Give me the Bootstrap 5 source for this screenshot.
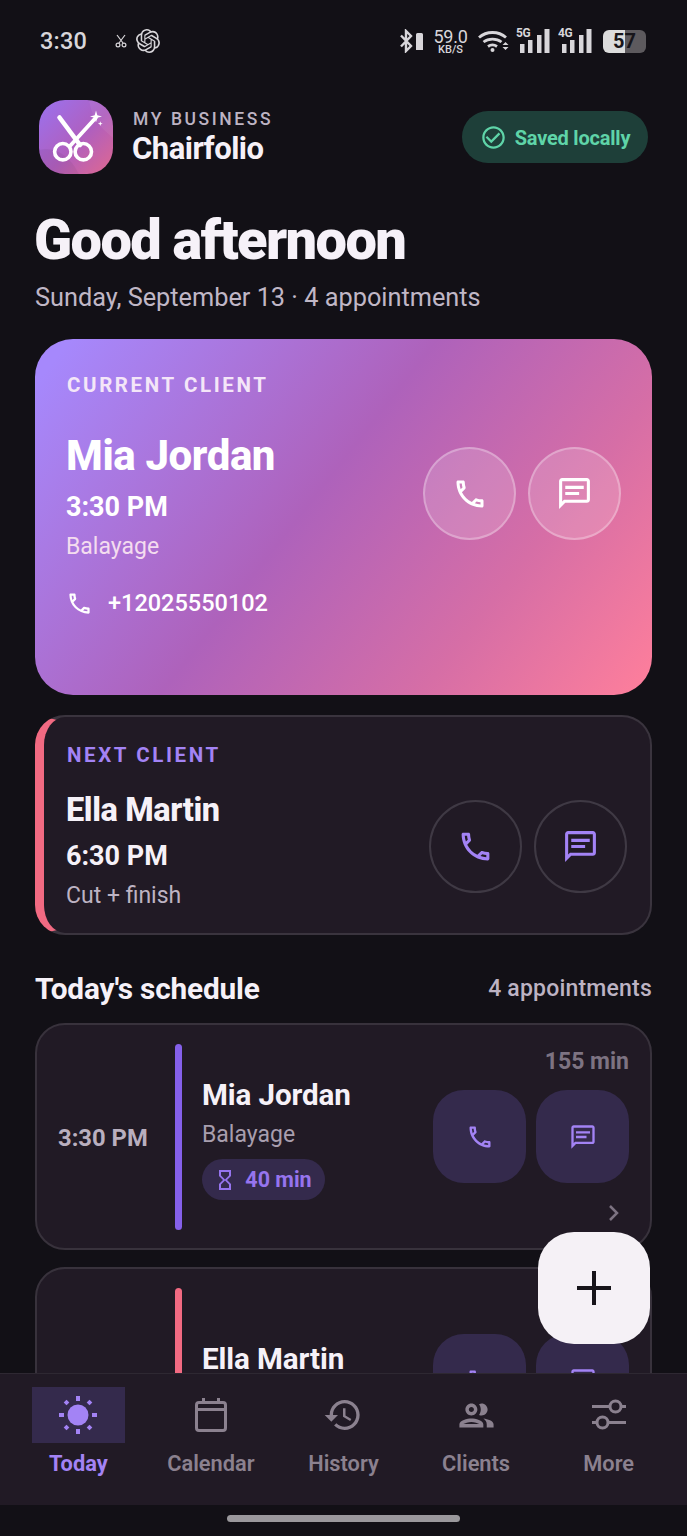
<!DOCTYPE html>
<html lang="en">
<head>
    <meta charset="UTF-8">
    <meta name="viewport" content="width=device-width, initial-scale=1.0">
    <link href="https://cdn.jsdelivr.net/npm/bootstrap@5.3.3/dist/css/bootstrap.min.css" rel="stylesheet">
    <title>Chairfolio</title>
    <style>
        html, body { height: 1536px; overflow: hidden; }
        body { background: #121016; font-family: Roboto, "Liberation Sans", sans-serif; color: #f6f1f8; }
        .ic { fill: currentColor; display: block; flex: none; }
        .app-shell { position: relative; width: 687px; height: 1536px; overflow: hidden; }

        .status-row { height: 82px; padding: 0 41px 0 40px; color: #d8d6da; }
        .status-time { font-size: 23.5px; font-weight: 500; line-height: 28px; letter-spacing: .2px; width: 74px; }
        .bt-wrap { margin-right: 10px; gap: 3px; }
        .speed { width: 35px; margin-right: 10px; line-height: 1; text-align: center; }
        .speed b { display: block; font-size: 18px; font-weight: 400; line-height: 17px; letter-spacing: -.3px; }
        .speed i { display: block; font-size: 11px; font-style: normal; line-height: 10px; font-weight: 500; }
        .wifi { margin-right: 6px; }
        .sig { position: relative; width: 34px; height: 24px; margin-right: 8px; }
        .sig.last-sig { margin-right: 11px; }
        .sig-tag { position: absolute; left: 0; top: -2px; font-size: 13px; line-height: 12px; font-weight: 700; letter-spacing: -.4px; transform: scaleX(.92); transform-origin: left; }
        .batt { position: relative; width: 43px; height: 23px; border-radius: 6px; background: linear-gradient(90deg, #dcdcdc 51%, #5d5a5e 51%); color: #17151a; font-size: 20px; font-weight: 700; line-height: 23px; text-align: center; }

        .main-scroll { height: 1291px; overflow: hidden; padding: 18px 35px 0; }
        .brand-logo { width: 74px; height: 74px; border-radius: 26px; overflow: hidden; margin-left: 4px; }
        .brand-text { padding-top: 4px; }
        .brand-kicker { font-size: 17.5px; font-weight: 500; letter-spacing: 2.6px; color: #bdb3c3; line-height: 20px; }
        .brand-name { font-size: 31px; font-weight: 700; line-height: 40px; letter-spacing: -.5px; margin-left: -1px; }
        .saved-pill { width: 186px; height: 52px; margin-right: 4px; margin-top: 11px; padding-top: 1px; background: #1e3f39; color: #5fd4a8; border-radius: 26px; font-size: 20px; font-weight: 700; letter-spacing: -.2px; }
        .greeting { font-size: 56px; font-weight: 900; line-height: 62px; letter-spacing: -1.6px; margin: 35px 0 0 -1px; }
        .sub-line { font-size: 25.3px; color: #c0b7c6; line-height: 30px; margin-top: 12px; margin-bottom: 26px; }

        .hero-card { height: 356px; border-radius: 38px; padding: 33px 31px 0 31px; background: linear-gradient(128deg, #a688fc 4%, #ae62bb 45%, #d66ea6 74%, #ff7f9b 100%); color: #fff; }
        .kicker { font-size: 20.5px; font-weight: 700; letter-spacing: 2.6px; line-height: 26px; }
        .hero-kicker { color: #f4e6f8; margin-left: 1px; }
        .hero-name { font-size: 42px; font-weight: 800; line-height: 48px; letter-spacing: -.4px; margin-top: 34px; }
        .hero-time { font-size: 27px; font-weight: 700; line-height: 34px; margin-top: 10px; }
        .hero-note { font-size: 23px; color: #f4dcef; line-height: 28px; margin-top: 9px; }
        .hero-phone { font-size: 23.5px; font-weight: 500; line-height: 30px; margin-top: 27px; gap: 15px; }
        .round-btn { width: 93px; height: 93px; border-radius: 50%; background: rgba(255,255,255,.16); border: 2px solid rgba(255,255,255,.28); color: #fff; }
        .hero-actions { margin-top: 75px; }

        .next-card { height: 220px; margin-top: 20px; border-radius: 30px; background: #211a25; border: 2px solid #3a343e; border-left: 9px solid #f26a82; padding: 25px 23px 0 22px; }
        .next-kicker { color: #a383f5; margin-left: 1px; }
        .next-name { font-size: 32.5px; font-weight: 800; line-height: 40px; letter-spacing: -.4px; margin-top: 22px; }
        .next-time { font-size: 27px; font-weight: 700; line-height: 34px; margin-top: 9px; }
        .next-note { font-size: 23px; color: #bdb3c3; line-height: 28px; margin-top: 9px; }
        .line-btn { width: 93px; height: 93px; border-radius: 50%; border: 2px solid #3f3944; color: #a383f5; }
        .next-actions { margin-top: 58px; }

        .sched-head { margin-top: 36px; margin-bottom: 16px; height: 36px; }
        .sched-title { font-size: 29.8px; font-weight: 700; letter-spacing: -.2px; }
        .sched-count { font-size: 23px; font-weight: 500; color: #bdb3c3; letter-spacing: .2px; }
        .sched-item { height: 227px; margin-bottom: 17px; border-radius: 30px; background: #211a25; border: 2px solid #38323c; padding: 19px 21px 18px 21px; }
        .sched-item.tall-item { height: 267px; }
        .sched-time { width: 117px; font-size: 23.8px; font-weight: 700; color: #b9afbf; margin-top: 3px; }
        .time-bar { width: 7px; border-radius: 4px; margin-right: 20px; }
        .bar-violet { background: #8560ea; }
        .bar-pink { background: #f26a82; }
        .sched-body { margin-top: 2px; }
        .sched-name { font-size: 29.6px; font-weight: 700; line-height: 36px; letter-spacing: -.1px; }
        .sched-note { font-size: 23px; color: #a89eae; line-height: 28px; margin-top: 8px; }
        .dur-pill { height: 41px; width: 123px; margin-top: 10px; padding: 2px 2px 0 0; border-radius: 21px; background: #342a4c; color: #9674ee; font-size: 21.5px; font-weight: 700; }
        .tall-body { padding-top: 59px; }
        .tall-body .sched-name { line-height: 24px; }
        .sched-side { width: 196px; }
        .sched-mins { font-size: 23px; font-weight: 700; color: #7d7382; line-height: 28px; margin-top: 4px; margin-bottom: 14px; text-align: right; }
        .tile-btn { width: 93px; height: 93px; border-radius: 31px; background: #342a4c; color: #a383f5; }
        .chevron { margin: 21px 8px 0 auto; color: #7d7382; }

        .add-fab { position: absolute; left: 538px; top: 1232px; width: 112px; height: 112px; border-radius: 36px; background: #f5f1f6; color: #17141a; border: 0; z-index: 3; }

        .tab-bar { height: 132px; padding: 13px 12px 0; background: #211a25; border-top: 1px solid #2e2832; position: relative; z-index: 2; }
        .tab-item { width: 132.6px; color: #8b818f; font-size: 21.8px; font-weight: 600; }
        .tab-icon { width: 93px; height: 56px; }
        .tab-item.active { color: #a383f5; font-weight: 700; }
        .tab-item.active .tab-icon { background: #342a4c; }
        .tab-label { line-height: 28px; margin-top: 7px; }
        .home-row { height: 31px; padding-top: 10px; }
        .home-pill { width: 233px; height: 7px; border-radius: 4px; background: #9a989c; }
    </style>
</head>
<body>
    <svg width="0" height="0" class="position-absolute">
        <symbol id="i-phone" viewBox="0 0 24 24"><path d="M6.54 5c.06.89.21 1.76.45 2.59l-1.2 1.2c-.41-1.2-.67-2.47-.76-3.79h1.51m9.86 12.02c.85.24 1.72.39 2.6.45v1.49c-1.32-.09-2.59-.35-3.8-.75l1.2-1.19M7.5 3H4c-.55 0-1 .45-1 1 0 9.39 7.61 17 17 17 .55 0 1-.45 1-1v-3.49c0-.55-.45-1-1-1-1.24 0-2.45-.2-3.57-.57-.1-.04-.21-.05-.31-.05-.26 0-.51.1-.71.29l-2.2 2.2c-2.83-1.45-5.15-3.76-6.59-6.59l2.2-2.2c.28-.28.36-.67.25-1.02C8.7 6.45 8.5 5.25 8.5 4c0-.55-.45-1-1-1z"/></symbol>
        <symbol id="i-chat" viewBox="0 0 24 24"><path d="M20 2H4c-1.1 0-2 .9-2 2v18l4-4h14c1.1 0 2-.9 2-2V4c0-1.1-.9-2-2-2zm0 14H5.17L4 17.17V4h16v12zM6 7h12v2H6zm0 4h9v2H6z"/></symbol>
        <symbol id="i-history" viewBox="0 0 24 24"><path d="M13 3c-4.97 0-9 4.03-9 9H1l3.89 3.89.07.14L9 12H6c0-3.87 3.13-7 7-7s7 3.13 7 7-3.13 7-7 7c-1.93 0-3.68-.79-4.94-2.06l-1.42 1.42C8.27 19.99 10.51 21 13 21c4.97 0 9-4.03 9-9s-4.03-9-9-9zm-1 5v5l4.28 2.54.72-1.21-3.5-2.08V8H12z"/></symbol>
        <symbol id="i-people" viewBox="0 0 24 24"><path d="M9 13.75c-2.34 0-7 1.17-7 3.5V19h14v-1.75c0-2.33-4.66-3.5-7-3.5zM4.34 17c.84-.58 2.87-1.25 4.66-1.25s3.82.67 4.66 1.25H4.34zM9 12c1.93 0 3.5-1.57 3.5-3.5S10.93 5 9 5 5.5 6.57 5.5 8.5 7.07 12 9 12zm0-5c.83 0 1.5.67 1.5 1.5S9.83 10 9 10s-1.5-.67-1.5-1.5S8.17 7 9 7zm7.04 6.81c1.16.84 1.96 1.96 1.96 3.44V19h4v-1.75c0-2.02-3.5-3.17-5.96-3.44zM15 12c1.93 0 3.5-1.57 3.5-3.5S16.93 5 15 5c-.54 0-1.04.13-1.5.35.63.89 1 1.98 1 3.15s-.37 2.26-1 3.15c.46.22.96.35 1.5.35z"/></symbol>
        <symbol id="i-hourglass" viewBox="0 0 24 24"><path d="M6 2v6h.01L6 8.01 10 12l-4 4 .01.01H6V22h12v-5.99h-.01L18 16l-4-4 4-3.99-.01-.01H18V2H6zm10 14.5V20H8v-3.5l4-4 4 4zm-4-5l-4-4V4h8v3.5l-4 4z"/></symbol>
        <symbol id="i-check" viewBox="0 0 24 24"><path d="M16.59 7.58 10 14.17l-3.59-3.58L5 12l5 5 8-8zM12 2C6.48 2 2 6.48 2 12s4.48 10 10 10 10-4.48 10-10S17.52 2 12 2zm0 18c-4.42 0-8-3.58-8-8s3.58-8 8-8 8 3.58 8 8-3.58 8-8 8z"/></symbol>
        <symbol id="i-bars" viewBox="0 0 34 24"><rect x="4" y="15" width="4.500" height="9"/><rect x="12" y="11" width="4.500" height="13"/><rect x="21" y="6" width="4.500" height="18"/><rect x="28.500" y="0" width="5" height="24"/></symbol>
    </svg>

    <div class="app-shell">
        <div class="status-row d-flex align-items-center">
            <div class="status-time">3:30</div>
            <svg width="14" height="14" viewBox="0 0 14 14" fill="none" stroke="currentColor" stroke-width="1.2"><path d="M3 1l6 8M11 1L5 9"/><circle cx="4" cy="11" r="1.9"/><circle cx="10" cy="11" r="1.9"/></svg>
            <svg class="ms-2 ic" width="24" height="24" viewBox="0 0 24 24"><path d="M22.2819 9.8211a5.9847 5.9847 0 0 0-.5157-4.9108 6.0462 6.0462 0 0 0-6.5098-2.9A6.0651 6.0651 0 0 0 4.9807 4.1818a5.9847 5.9847 0 0 0-3.9977 2.9 6.0462 6.0462 0 0 0 .7427 7.0966 5.98 5.98 0 0 0 .511 4.9107 6.051 6.051 0 0 0 6.5146 2.9001A5.9847 5.9847 0 0 0 13.2599 24a6.0557 6.0557 0 0 0 5.7718-4.2058 5.9894 5.9894 0 0 0 3.9977-2.9001 6.0557 6.0557 0 0 0-.7475-7.0729zm-9.022 12.6081a4.4755 4.4755 0 0 1-2.8764-1.0408l.1419-.0804 4.7783-2.7582a.7948.7948 0 0 0 .3927-.6813v-6.7369l2.02 1.1686a.071.071 0 0 1 .038.052v5.5826a4.504 4.504 0 0 1-4.4945 4.4944zm-9.6607-4.1254a4.4708 4.4708 0 0 1-.5346-3.0137l.142.0852 4.783 2.7582a.7712.7712 0 0 0 .7806 0l5.8428-3.3685v2.3324a.0804.0804 0 0 1-.0332.0615L9.74 19.9502a4.4992 4.4992 0 0 1-6.1408-1.6464zM2.3408 7.8956a4.485 4.485 0 0 1 2.3655-1.9728V11.6a.7664.7664 0 0 0 .3879.6765l5.8144 3.3543-2.0201 1.1685a.0757.0757 0 0 1-.071 0l-4.8303-2.7865A4.504 4.504 0 0 1 2.3408 7.872zm16.5963 3.8558L13.1038 8.364 15.1192 7.2a.0757.0757 0 0 1 .071 0l4.8303 2.7913a4.4944 4.4944 0 0 1-.6765 8.1042v-5.6772a.79.79 0 0 0-.407-.667zm2.0107-3.0231l-.142-.0852-4.7735-2.7818a.7759.7759 0 0 0-.7854 0L9.409 9.2297V6.8974a.0662.0662 0 0 1 .0284-.0615l4.8303-2.7866a4.4992 4.4992 0 0 1 6.6802 4.66zM8.3065 12.863l-2.02-1.1638a.0804.0804 0 0 1-.038-.0567V6.0742a4.4992 4.4992 0 0 1 7.3757-3.4537l-.142.0805L8.704 5.459a.7948.7948 0 0 0-.3927.6813zm1.0976-2.3654l2.602-1.4998 2.6069 1.4998v2.9994l-2.5974 1.4997-2.6067-1.4997Z"/></svg>
            <div class="ms-auto d-flex align-items-center">
                <div class="bt-wrap d-flex align-items-center">
                    <svg width="13" height="24" viewBox="0 0 13 24" fill="none" stroke="currentColor" stroke-width="2.4"><path d="M1 6.500l10 10.500-5 5V2l5 5L1 17.500"/></svg>
                    <svg width="7" height="17" viewBox="0 0 7 17"><path d="M1.500 0h4A1.500 1.500 0 0 1 7 1.500V17H0V1.500A1.500 1.500 0 0 1 1.500 0z" fill="currentColor"/></svg>
                </div>
                <div class="speed"><b>59.0</b><i>KB/S</i></div>
                <svg class="wifi" width="32" height="24" viewBox="0 0 32 24" fill="none" stroke="currentColor" stroke-width="2.800"><path d="M1 8.500C8.500 1.800 20.500 1.800 28 8.500M5.500 13c5-3.800 13-3.800 18 0M10 17.500c2.600-1.800 6.400-1.800 9 0"/><circle cx="14.500" cy="21" r="2" fill="currentColor" stroke="none"/><path d="M24.500 16l3-3 3 3zM24.500 18l3 3 3-3z" fill="currentColor" stroke="none"/></svg>
                <div class="sig"><span class="sig-tag">5G</span><svg class="ic" width="34" height="24"><use href="#i-bars"/></svg></div>
                <div class="sig last-sig"><span class="sig-tag">4G</span><svg class="ic" width="34" height="24"><use href="#i-bars"/></svg></div>
                <div class="batt">57</div>
            </div>
        </div>

        <div class="main-scroll">
            <div class="d-flex align-items-start justify-content-between">
                <div class="d-flex align-items-center">
                    <div class="brand-logo">
                        <svg width="74" height="74" viewBox="0 0 74 74">
                            <defs>
                                <linearGradient id="logoFill" x1="0" y1="0" x2="1" y2="1"><stop offset="0" stop-color="#9a72f0"/><stop offset=".55" stop-color="#b05fbe"/><stop offset="1" stop-color="#e0688f"/></linearGradient>
                            </defs>
                            <rect width="74" height="74" fill="url(#logoFill)"/>
                            <path d="M50 0h24v38c-8-8-20-14-24-38z" fill="#fff" opacity=".06"/>
                            <path d="M0 50c14-4 30 4 40 24H0z" fill="#000" opacity=".05"/>
                            <g fill="none" stroke="#fff"><path d="M20.500 17.500L41 45" stroke-width="4.600" stroke-linecap="round"/><path d="M57 17.500L31 46" stroke-width="3.800" stroke-linecap="round"/><circle cx="23.800" cy="51.700" r="8.200" stroke-width="3.600"/><circle cx="44.300" cy="51.700" r="8.200" stroke-width="3.600"/></g>
                            <path d="M57 10.500l1.300 4.700 4.700 1.300-4.700 1.300-1.300 4.700-1.300-4.700-4.700-1.300 4.700-1.300z" fill="#fff"/>
                            <path d="M61.300 21.300l.6 1.800 1.800.6-1.800.6-.6 1.800-.6-1.800-1.800-.6 1.800-.6z" fill="#fff"/>
                        </svg>
                    </div>
                    <div class="brand-text ms-3 ps-1">
                        <div class="brand-kicker">MY BUSINESS</div>
                        <div class="brand-name">Chairfolio</div>
                    </div>
                </div>
                <div class="saved-pill d-flex align-items-center justify-content-center gap-2">
                    <svg class="ic" width="27" height="27"><use href="#i-check"/></svg>
                    <span>Saved locally</span>
                </div>
            </div>

            <h1 class="greeting">Good afternoon</h1>
            <div class="sub-line">Sunday, September 13 · 4 appointments</div>

            <div class="hero-card d-flex justify-content-between">
                <div>
                    <div class="kicker hero-kicker">CURRENT CLIENT</div>
                    <div class="hero-name">Mia Jordan</div>
                    <div class="hero-time">3:30 PM</div>
                    <div class="hero-note">Balayage</div>
                    <div class="hero-phone d-flex align-items-center">
                        <svg class="ic" width="27" height="27"><use href="#i-phone"/></svg>
                        <span>+12025550102</span>
                    </div>
                </div>
                <div class="hero-actions d-flex gap-2">
                    <div class="round-btn d-flex align-items-center justify-content-center"><svg class="ic" width="36" height="36"><use href="#i-phone"/></svg></div>
                    <div class="round-btn d-flex align-items-center justify-content-center ms-1"><svg class="ic" width="37" height="37"><use href="#i-chat"/></svg></div>
                </div>
            </div>

            <div class="next-card d-flex justify-content-between">
                <div>
                    <div class="kicker next-kicker">NEXT CLIENT</div>
                    <div class="next-name">Ella Martin</div>
                    <div class="next-time">6:30 PM</div>
                    <div class="next-note">Cut + finish</div>
                </div>
                <div class="next-actions d-flex gap-2 align-items-start">
                    <div class="line-btn d-flex align-items-center justify-content-center"><svg class="ic" width="37" height="37"><use href="#i-phone"/></svg></div>
                    <div class="line-btn d-flex align-items-center justify-content-center ms-1"><svg class="ic" width="37" height="37"><use href="#i-chat"/></svg></div>
                </div>
            </div>

            <div class="sched-head d-flex align-items-center justify-content-between">
                <div class="sched-title">Today's schedule</div>
                <div class="sched-count">4 appointments</div>
            </div>

            <div class="sched-item d-flex">
                <div class="sched-time align-self-center">3:30 PM</div>
                <div class="time-bar bar-violet"></div>
                <div class="sched-body flex-grow-1 align-self-center">
                    <div class="sched-name">Mia Jordan</div>
                    <div class="sched-note">Balayage</div>
                    <div class="dur-pill d-flex align-items-center justify-content-center gap-2">
                        <svg class="ic" width="24" height="24"><use href="#i-hourglass"/></svg>
                        <span>40 min</span>
                    </div>
                </div>
                <div class="sched-side d-flex flex-column">
                    <div class="sched-mins">155 min</div>
                    <div class="d-flex justify-content-between">
                        <div class="tile-btn d-flex align-items-center justify-content-center"><svg class="ic" width="28" height="28"><use href="#i-phone"/></svg></div>
                        <div class="tile-btn d-flex align-items-center justify-content-center"><svg class="ic" width="28" height="28"><use href="#i-chat"/></svg></div>
                    </div>
                    <svg class="chevron" width="14" height="18" viewBox="0 0 14 18" fill="none" stroke="currentColor" stroke-width="2.500"><path d="M3 2l7 7-7 7"/></svg>
                </div>
            </div>

            <div class="sched-item tall-item d-flex">
                <div class="sched-time"></div>
                <div class="time-bar bar-pink"></div>
                <div class="flex-grow-1 tall-body">
                    <div class="sched-name">Ella Martin</div>
                </div>
                <div class="sched-side d-flex flex-column">
                    <div class="sched-mins">60 min</div>
                    <div class="d-flex justify-content-between">
                        <div class="tile-btn d-flex align-items-center justify-content-center"><svg class="ic" width="28" height="28"><use href="#i-phone"/></svg></div>
                        <div class="tile-btn d-flex align-items-center justify-content-center"><svg class="ic" width="28" height="28"><use href="#i-chat"/></svg></div>
                    </div>
                </div>
            </div>
        </div>

        <button class="add-fab d-flex align-items-center justify-content-center" type="button" aria-label="Add">
            <svg width="36" height="36" viewBox="0 0 36 36" fill="currentColor"><rect x="16" y="1" width="4" height="34"/><rect x="1" y="16" width="34" height="4"/></svg>
        </button>

        <div class="tab-bar d-flex">
            <div class="tab-item active d-flex flex-column align-items-center">
                <div class="tab-icon d-flex align-items-center justify-content-center">
                    <svg width="40" height="40" viewBox="0 0 40 40" fill="currentColor"><circle cx="20" cy="20" r="10.500"/><rect x="18" y="1" width="4" height="5"/><rect x="18" y="34" width="4" height="5"/><rect x="1" y="18" width="5" height="4"/><rect x="34" y="18" width="5" height="4"/><rect x="6.500" y="5.500" width="4" height="4" transform="rotate(45 8.500 7.500)"/><rect x="29.500" y="5.500" width="4" height="4" transform="rotate(45 31.500 7.500)"/><rect x="6.500" y="30.500" width="4" height="4" transform="rotate(45 8.500 32.500)"/><rect x="29.500" y="30.500" width="4" height="4" transform="rotate(45 31.500 32.500)"/></svg>
                </div>
                <div class="tab-label">Today</div>
            </div>
            <div class="tab-item d-flex flex-column align-items-center">
                <div class="tab-icon d-flex align-items-center justify-content-center">
                    <svg width="34" height="36" viewBox="0 0 34 36" fill="none" stroke="currentColor" stroke-width="3"><rect x="2.500" y="5.500" width="29" height="28" rx="2.500"/><path d="M2.500 12.500h29M9.500 1v6M24.500 1v6"/></svg>
                </div>
                <div class="tab-label">Calendar</div>
            </div>
            <div class="tab-item d-flex flex-column align-items-center">
                <div class="tab-icon d-flex align-items-center justify-content-center"><svg class="ic" width="40" height="40"><use href="#i-history"/></svg></div>
                <div class="tab-label">History</div>
            </div>
            <div class="tab-item d-flex flex-column align-items-center">
                <div class="tab-icon d-flex align-items-center justify-content-center"><svg class="ic" width="41" height="41"><use href="#i-people"/></svg></div>
                <div class="tab-label">Clients</div>
            </div>
            <div class="tab-item d-flex flex-column align-items-center">
                <div class="tab-icon d-flex align-items-center justify-content-center">
                    <svg width="36" height="32" viewBox="0 0 36 32" fill="none" stroke="currentColor" stroke-width="3"><path d="M1 7.500h18M30 7.500h5M1 23.500h5M17 23.500h18"/><circle cx="24.500" cy="7.500" r="5.500"/><circle cx="11.500" cy="23.500" r="5.500"/></svg>
                </div>
                <div class="tab-label">More</div>
            </div>
        </div>
        <div class="home-row d-flex justify-content-center"><div class="home-pill"></div></div>
    </div>
</body>
</html>
